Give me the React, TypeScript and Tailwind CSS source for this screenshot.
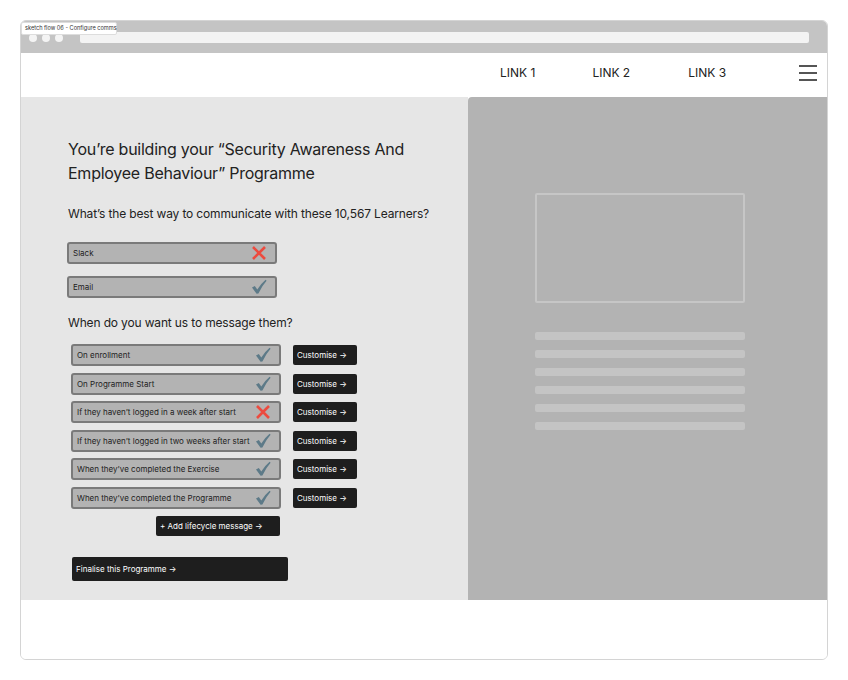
import React from "react";

const Check = () => (
  <svg width="16" height="16" viewBox="0 0 16 16" className="shrink-0">
    <path d="M1 8.6 L3.8 7 L6.3 10.6 Q9.8 4.8 14.6 0.8 L15.6 1.8 Q11 6.8 7.4 14.6 L5.6 14.8 Z" fill="#5d7a88" />
  </svg>
);

const Cross = () => (
  <svg width="16" height="16" viewBox="0 0 16 16" className="shrink-0">
    <path d="M2 2 L14 14 M14 2 L2 14" stroke="#ec4b3f" strokeWidth="2.6" strokeLinecap="butt" />
  </svg>
);

function Option({ label, ok, w }: { label: string; ok: boolean; w: string }) {
  return (
    <div
      className={`${w} h-[22px] flex items-center justify-between pl-[4px] pr-[8px] bg-[#b3b3b3] border-2 border-[#7a7a7a] rounded-[3px] text-[8px] text-[#222] whitespace-nowrap`}
    >
      <span>{label}</span>
      {ok ? <Check /> : <Cross />}
    </div>
  );
}

const rows: [string, boolean][] = [
  ["On enrollment", true],
  ["On Programme Start", true],
  ["If they haven’t logged in a week after start", false],
  ["If they haven’t logged in two weeks after start", true],
  ["When they’ve completed the Exercise", true],
  ["When they’ve completed the Programme", true],
];

export default function App() {
  return (
    <div className="w-[848px] h-[680px] bg-white pt-[20px] px-[20px]" style={{ fontFamily: "Inter, 'Noto Sans', sans-serif" }}>
      <div className="w-[808px] h-[640px] border border-[#d4d4d4] rounded-[6px] overflow-hidden flex flex-col bg-white">
        {/* browser chrome */}
        <div className="relative h-[32px] bg-[#c4c4c4] flex items-center shrink-0">
          <div className="flex gap-[5px] pl-[8px] pt-[2px]">
            <div className="w-[8px] h-[8px] rounded-full bg-[#f4f4f4]" />
            <div className="w-[8px] h-[8px] rounded-full bg-[#f4f4f4]" />
            <div className="w-[8px] h-[8px] rounded-full bg-[#f4f4f4]" />
          </div>
          <div className="ml-[17px] mr-[18px] flex-1 h-[11px] bg-[#f3f3f3] rounded-[2px]" />
          <div className="absolute left-0 top-[1px] h-[13px] w-[96px] px-[3px] bg-white rounded-[2px] text-[5.6px] text-[#333] flex items-center border border-[#ddd] whitespace-nowrap">
            sketch flow 06 - Configure comms
          </div>
        </div>
        {/* nav */}
        <div className="h-[44px] shrink-0 flex items-center pb-[4px] text-[12px] text-[#222] bg-white">
          <span className="ml-[479px]">LINK 1</span>
          <span className="ml-[57px]">LINK 2</span>
          <span className="ml-[58px]">LINK 3</span>
          <div className="ml-auto mr-[10px] flex flex-col gap-[5px]">
            <div className="w-[18px] h-[2px] bg-[#555]" />
            <div className="w-[18px] h-[2px] bg-[#555]" />
            <div className="w-[18px] h-[2px] bg-[#555]" />
          </div>
        </div>
        {/* main */}
        <div className="h-[503px] shrink-0 flex">
          <div className="w-[447px] bg-[#e6e6e6] pl-[47px] pt-[40px] text-[#222]">
            <h1 className="text-[16px] leading-[24px] tracking-[-0.25px] font-normal w-[380px]">
              You’re building your “Security Awareness And Employee Behaviour” Programme
            </h1>
            <p className="mt-[20px] text-[12px] leading-[18px] tracking-[-0.15px] whitespace-nowrap">
              What’s the best way to communicate with these 10,567 Learners?
            </p>
            <div className="mt-[19px] ml-[-1px] flex flex-col gap-[12px]">
              <Option label="Slack" ok={false} w="w-[210px]" />
              <Option label="Email" ok={true} w="w-[210px]" />
            </div>
            <p className="mt-[16px] text-[12px] leading-[18px] tracking-[-0.15px]">When do you want us to message them?</p>
            <div className="mt-[12px] ml-[3px] flex flex-col gap-[6.5px]">
              {rows.map(([l, ok]) => (
                <div key={l} className="flex items-center gap-[12px]">
                  <Option label={l} ok={ok} w="w-[210px]" />
                  <button className="w-[64px] h-[20px] bg-[#1e1e1e] text-white text-[8px] rounded-[2px] flex items-center pl-[4px]">
                    Customise →
                  </button>
                </div>
              ))}
            </div>
            <button className="mt-[7px] ml-[88px] w-[124px] h-[20px] bg-[#1e1e1e] text-white text-[8px] rounded-[2px] flex items-center pl-[4px]">
              + Add lifecycle message →
            </button>
            <button className="mt-[21px] ml-[4px] w-[216px] h-[24px] bg-[#1e1e1e] text-white text-[8px] rounded-[2px] flex items-center pl-[4px]">
              Finalise this Programme →
            </button>
          </div>
          <div className="flex-1 bg-[#b3b3b3] rounded-tl-[4px] pl-[67px] pt-[96px]">
            <div className="w-[210px] h-[110px] border-2 border-[#c6c6c6] rounded-[2px]" />
            <div className="mt-[29px] flex flex-col gap-[10px]">
              {[0, 1, 2, 3, 4, 5].map((i) => (
                <div key={i} className="w-[210px] h-[8px] bg-[#c4c4c4] rounded-[2px]" />
              ))}
            </div>
          </div>
        </div>
        <div className="flex-1 bg-white" />
      </div>
    </div>
  );
}
